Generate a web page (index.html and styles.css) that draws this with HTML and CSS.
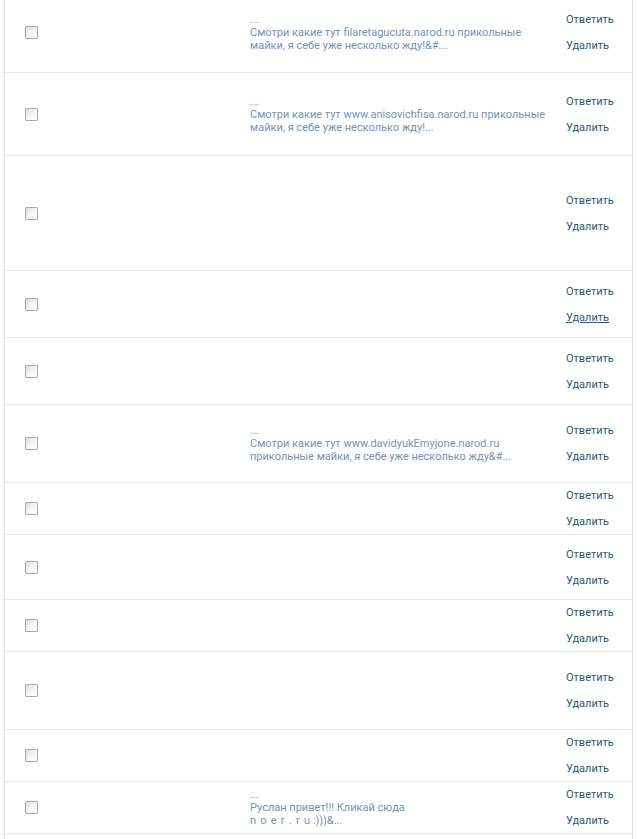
FILE: index.html
```html
<!DOCTYPE html>
<html lang="ru">
<head>
<meta charset="utf-8">
<title>Комментарии</title>
<link rel="stylesheet" href="styles.css">
</head>
<body>
<div class="list">
  <div class="row r80">
    <div class="sel"><span class="cb"></span></div>
    <div class="msg"><div class="dots">...</div><div class="txt">Смотри какие тут filaretagucuta.narod.ru прикольные майки, я себе уже несколько жду!&amp;#...</div></div>
    <div class="acts"><a href="#">Ответить</a><a href="#">Удалить</a></div>
  </div>
  <div class="row r83">
    <div class="sel"><span class="cb"></span></div>
    <div class="msg"><div class="dots">...</div><div class="txt">Смотри какие тут www.anisovichfisa.narod.ru прикольные майки, я себе уже несколько жду!...</div></div>
    <div class="acts"><a href="#">Ответить</a><a href="#">Удалить</a></div>
  </div>
  <div class="row r115">
    <div class="sel"><span class="cb"></span></div>
    <div class="msg"></div>
    <div class="acts"><a href="#">Ответить</a><a href="#">Удалить</a></div>
  </div>
  <div class="row r67">
    <div class="sel"><span class="cb"></span></div>
    <div class="msg"></div>
    <div class="acts"><a href="#">Ответить</a><a href="#" class="hover">Удалить</a></div>
  </div>
  <div class="row r67">
    <div class="sel"><span class="cb"></span></div>
    <div class="msg"></div>
    <div class="acts"><a href="#">Ответить</a><a href="#">Удалить</a></div>
  </div>
  <div class="row r78">
    <div class="sel"><span class="cb"></span></div>
    <div class="msg"><div class="dots">...</div><div class="txt">Смотри какие тут www.davidyukEmyjone.narod.ru прикольные майки, я себе уже несколько жду&amp;#...</div></div>
    <div class="acts"><a href="#">Ответить</a><a href="#">Удалить</a></div>
  </div>
  <div class="row r52">
    <div class="sel"><span class="cb"></span></div>
    <div class="msg"></div>
    <div class="acts"><a href="#">Ответить</a><a href="#">Удалить</a></div>
  </div>
  <div class="row r65">
    <div class="sel"><span class="cb"></span></div>
    <div class="msg"></div>
    <div class="acts"><a href="#">Ответить</a><a href="#">Удалить</a></div>
  </div>
  <div class="row r52">
    <div class="sel"><span class="cb"></span></div>
    <div class="msg"></div>
    <div class="acts"><a href="#">Ответить</a><a href="#">Удалить</a></div>
  </div>
  <div class="row r78">
    <div class="sel"><span class="cb"></span></div>
    <div class="msg"></div>
    <div class="acts"><a href="#">Ответить</a><a href="#">Удалить</a></div>
  </div>
  <div class="row r52">
    <div class="sel"><span class="cb"></span></div>
    <div class="msg"></div>
    <div class="acts"><a href="#">Ответить</a><a href="#">Удалить</a></div>
  </div>
  <div class="row r52">
    <div class="sel"><span class="cb"></span></div>
    <div class="msg"><div class="dots">...</div><div class="txt">Руслан привет!!! Кликай сюда<br><span class="spaced">n o e r . r u</span> :)))&amp;...</div></div>
    <div class="acts"><a href="#">Ответить</a><a href="#">Удалить</a></div>
  </div>
  <div class="row r52">
    <div class="sel"></div>
    <div class="msg"></div>
    <div class="acts"></div>
  </div>
</div>
</body>
</html>
```
FILE: styles.css
```css
html, body {
  margin: 0;
  padding: 0;
  background: #fff;
  overflow: hidden;
}
body {
  font-family: Roboto, "Liberation Sans", sans-serif;
  font-size: 11px;
  line-height: 13px;
}
.list {
  margin: -7px 0 0 4px;
  width: 629px;
  box-sizing: border-box;
  border-left: 1px solid #d9dee6;
  border-right: 1px solid #d9dfe8;
}
.row {
  display: grid;
  grid-template-columns: 245px 315px 1fr;
  align-items: center;
  box-sizing: border-box;
  border-bottom: 1px solid #e6eaef;
}
.r52 { height: 52px; }
.r65 { height: 65px; }
.r67 { height: 67px; }
.r78 { height: 78px; }
.r80 { height: 80px; }
.r83 { height: 83px; }
.r115 { height: 115px; }
.sel {
  padding-left: 20px;
  display: flex;
  align-items: center;
}
.cb {
  display: block;
  width: 11px;
  height: 11px;
  border: 1px solid #a9a9a9;
  border-radius: 1px;
  background: linear-gradient(135deg, #dcdcdc 0%, #f4f4f4 45%, #ffffff 100%);
}
.msg {
  width: 305px;
}
.dots {
  color: #8a8a8a;
}
.txt {
  color: #7393b7;
}
.spaced {
  word-spacing: 1.5px;
}
.acts {
  display: flex;
  flex-direction: column;
  gap: 13px;
  padding-left: 1px;
}
.acts a {
  color: #2b587a;
  text-decoration: none;
}
.acts a.hover {
  text-decoration: underline;
}
```
